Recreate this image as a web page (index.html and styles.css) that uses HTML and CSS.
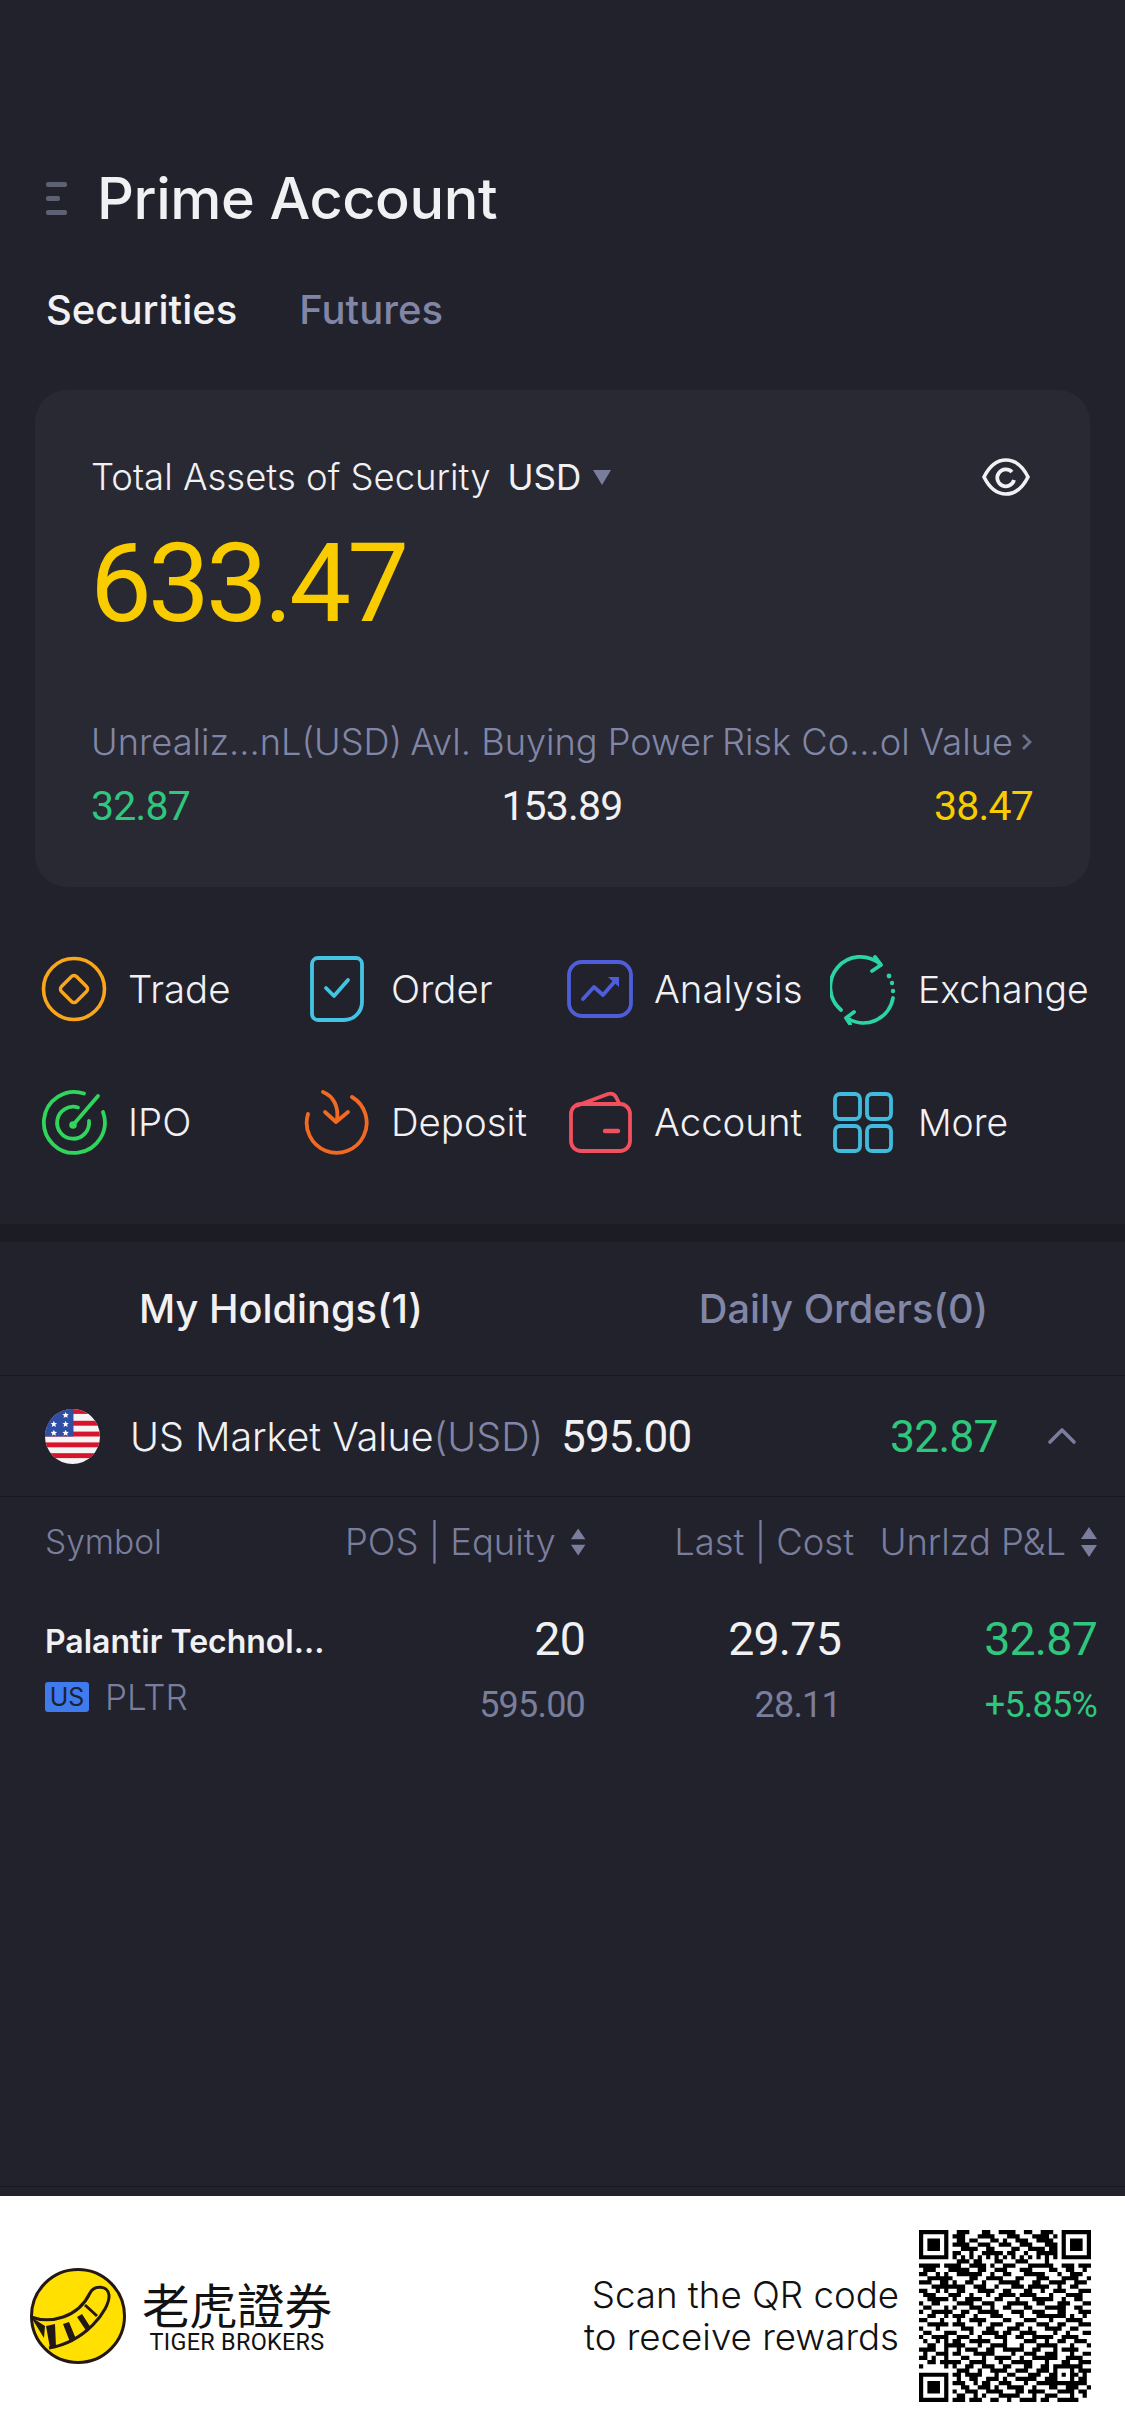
FILE: index.html
```html
<!DOCTYPE html>
<html lang="en">
<head>
<meta charset="utf-8">
<title>Prime Account</title>
<link rel="stylesheet" href="styles.css">
</head>
<body>
<div class="page">
  <header class="topbar">
    <span class="menu"><i class="m1"></i><i class="m2"></i><i class="m1"></i></span>
    <h1 class="title">Prime Account</h1>
  </header>
  <nav class="seg">
    <span class="seg-on">Securities</span>
    <span class="seg-off">Futures</span>
  </nav>

  <section class="card">
    <div class="card-head">
      <span class="assets">Total Assets of Security</span>
      <span class="ccy">USD</span>
      <svg class="caret" viewBox="0 0 18 16"><path d="M0 1h18L9 16z" fill="#7a7e9c"/></svg>
      <svg class="eye" viewBox="0 0 48 38"><path d="M2 19C8 7 16 2 24 2s16 5 22 17c-6 12-14 17-22 17S8 31 2 19z" fill="none" stroke="#f1f1f4" stroke-width="3.6"/><path d="M30 14a8.5 8.5 0 1 0 2 8" fill="none" stroke="#f1f1f4" stroke-width="3.8"/></svg>
    </div>
    <div class="amount">633.47</div>
    <div class="m-labels">
      <span>Unrealiz...nL(USD)</span>
      <span>Avl. Buying Power</span>
      <span>Risk Co...ol Value</span>
      <svg class="m-chev" viewBox="0 0 12 18"><path d="M2 2l7 7-7 7" fill="none" stroke="#6d7089" stroke-width="2.8"/></svg>
    </div>
    <div class="m-values">
      <span class="num green">32.87</span>
      <span class="num white">153.89</span>
      <span class="num yellow">38.47</span>
    </div>
  </section>

  <section class="actions">
    <div class="act">
      <svg class="ic" viewBox="0 0 66 66"><circle cx="33" cy="33" r="30.5" fill="none" stroke="#f9a61a" stroke-width="3.6"/><path d="M30.5 20.5a3.5 3.5 0 0 1 5 0l10 10a3.5 3.5 0 0 1 0 5l-10 10a3.5 3.5 0 0 1-5 0l-10-10a3.5 3.5 0 0 1 0-5z" fill="none" stroke="#f9a61a" stroke-width="3.4"/></svg>
      <span class="lbl">Trade</span>
    </div>
    <div class="act">
      <svg class="ic" viewBox="0 0 66 66"><path d="M14 2h38a6 6 0 0 1 6 6v38a18 18 0 0 1-18 18H14a6 6 0 0 1-6-6V8a6 6 0 0 1 6-6z" fill="none" stroke="#45c3e3" stroke-width="3.8"/><path d="M22 32l8 8 14-16" fill="none" stroke="#45c3e3" stroke-width="3.8" stroke-linecap="round" stroke-linejoin="round"/></svg>
      <span class="lbl">Order</span>
    </div>
    <div class="act">
      <svg class="ic" viewBox="0 0 66 66"><rect x="2" y="6" width="62" height="54" rx="13" fill="none" stroke="#4e5edb" stroke-width="3.8"/><path d="M16 43l11-12 9 8 13-15" fill="none" stroke="#4e5edb" stroke-width="3.8" stroke-linecap="round" stroke-linejoin="round"/><path d="M41 21h11v10z" fill="#4e5edb"/></svg>
      <span class="lbl">Analysis</span>
    </div>
    <div class="act">
      <svg class="ic tall" viewBox="0 0 66 72"><path d="M11 57A30 30 0 0 1 50 11" fill="none" stroke="#2bd3a6" stroke-width="3.8" stroke-linecap="round"/><path d="M45 4l6 8-9 6M24 59l-8 6 4 6" fill="none" stroke="#2bd3a6" stroke-width="3.8" stroke-linecap="round" stroke-linejoin="round"/><path d="M63 45A30 30 0 0 1 17 65" fill="none" stroke="#2bd3a6" stroke-width="3.8" stroke-linecap="round"/><circle cx="59" cy="23" r="2.4" fill="#2bd3a6"/><circle cx="62" cy="30" r="2.2" fill="#2bd3a6"/><circle cx="63" cy="38" r="2.2" fill="#2bd3a6"/></svg>
      <span class="lbl lbl-sm">Exchange</span>
    </div>
    <div class="act">
      <svg class="ic" viewBox="0 0 66 66"><path d="M43 4.5A30.5 30.5 0 1 0 62 23" fill="none" stroke="#2fd65b" stroke-width="3.8" stroke-linecap="round"/><path d="M37 18.5A16 16 0 1 0 48 32" fill="none" stroke="#2fd65b" stroke-width="3.8" stroke-linecap="round"/><path d="M32 36L57 7" fill="none" stroke="#2fd65b" stroke-width="3.8" stroke-linecap="round"/><circle cx="32" cy="36" r="3.8" fill="#2fd65b"/></svg>
      <span class="lbl">IPO</span>
    </div>
    <div class="act">
      <svg class="ic" viewBox="0 0 66 66"><path d="M48 8a30 30 0 1 1-44 17" fill="none" stroke="#f26a21" stroke-width="3.8" stroke-linecap="round"/><path d="M19 3c10 4 16 14 14 28M21 23l11 10 12-10" fill="none" stroke="#f26a21" stroke-width="3.8" stroke-linecap="round" stroke-linejoin="round"/></svg>
      <span class="lbl">Deposit</span>
    </div>
    <div class="act">
      <svg class="ic" viewBox="0 0 66 66"><rect x="4" y="15" width="59" height="47" rx="10" fill="none" stroke="#f1505f" stroke-width="3.8"/><path d="M9 17l32-12c4-1 6 0 8 3l4 8" fill="none" stroke="#f1505f" stroke-width="3.8" stroke-linejoin="round"/><path d="M38 42h13" stroke="#f1505f" stroke-width="4.4" stroke-linecap="round"/></svg>
      <span class="lbl">Account</span>
    </div>
    <div class="act">
      <svg class="ic" viewBox="0 0 66 66"><g fill="none" stroke="#3fbcdd" stroke-width="3.8"><rect x="5" y="5" width="25" height="25" rx="5"/><rect x="37" y="5" width="24" height="25" rx="5"/><rect x="5" y="37" width="25" height="25" rx="5"/><rect x="37" y="37" width="24" height="25" rx="5"/></g></svg>
      <span class="lbl lbl-sm">More</span>
    </div>
  </section>

  <div class="band"></div>

  <nav class="hold-tabs">
    <span class="ht-on">My Holdings(1)</span>
    <span class="ht-off">Daily Orders(0)</span>
  </nav>

  <section class="market">
    <svg class="flag" viewBox="0 0 56 56">
      <defs><clipPath id="fc"><circle cx="28" cy="28" r="28"/></clipPath></defs>
      <g clip-path="url(#fc)">
        <rect width="56" height="56" fill="#f5f5f5"/>
        <g fill="#d8142c"><rect y="0" width="56" height="5"/><rect y="12" width="56" height="5"/><rect y="23" width="56" height="5"/><rect y="34" width="56" height="5"/><rect y="45" width="56" height="5"/></g>
        <rect width="29" height="28" fill="#2f4fa5"/>
        <g fill="#fff"><path d="M21 3l.9 2.2 2.4.2-1.8 1.5.6 2.3-2.1-1.3-2.1 1.3.6-2.3-1.8-1.5 2.4-.2z"/><path d="M9 12l.9 2.2 2.4.2-1.8 1.5.6 2.3L9 17l-2.1 1.2.6-2.3-1.8-1.5 2.4-.2z"/><path d="M21 12l.9 2.2 2.4.2-1.8 1.5.6 2.3L21 17l-2.1 1.2.6-2.3-1.8-1.5 2.4-.2z"/><path d="M9 21l.9 2.2 2.4.2-1.8 1.5.6 2.3L9 26l-2.1 1.2.6-2.3-1.8-1.5 2.4-.2z"/><path d="M21 21l.9 2.2 2.4.2-1.8 1.5.6 2.3L21 26l-2.1 1.2.6-2.3-1.8-1.5 2.4-.2z"/></g>
      </g>
    </svg>
    <span class="mk-name">US Market Value<span class="mk-ccy">(USD)</span></span>
    <span class="num mk-val">595.00</span>
    <span class="num green mk-pl">32.87</span>
    <svg class="mk-chev" viewBox="0 0 30 18"><path d="M3 15L15 3l12 12" fill="none" stroke="#7a7e9c" stroke-width="3.6" stroke-linecap="round" stroke-linejoin="round"/></svg>
  </section>

  <div class="thead">
    <span class="th th-sym">Symbol</span>
    <span class="th th-r">POS | Equity<svg class="sort" viewBox="0 0 18 30"><path d="M9 0l8 12H1zM9 30L1 18h16z" fill="#7a7e9c"/></svg></span>
    <span class="th th-r">Last | Cost</span>
    <span class="th th-r">Unrlzd P&amp;L<svg class="sort" viewBox="0 0 18 30"><path d="M9 0l8 12H1zM9 30L1 18h16z" fill="#7a7e9c"/></svg></span>
  </div>

  <div class="trow">
    <div class="tc">
      <span class="sname">Palantir Technol...</span>
      <span class="ssub"><span class="badge">US</span><span class="tick">PLTR</span></span>
    </div>
    <div class="tc tr"><span class="num big white">20</span><span class="num small gray">595.00</span></div>
    <div class="tc tr"><span class="num big white">29.75</span><span class="num small gray">28.11</span></div>
    <div class="tc tr"><span class="num big green">32.87</span><span class="num small green">+5.85%</span></div>
  </div>

  <div class="spacer"></div>

  <footer class="promo">
    <svg class="logo" viewBox="0 0 96 96">
      <circle cx="48" cy="48" r="46.5" fill="#ffe000" stroke="#231815" stroke-width="3"/>
      <path d="M1 49C20 56 48 50 60 25 64 17 78 17 79 27 80 42 55 74 19 80" fill="none" stroke="#231815" stroke-width="3"/>
      <path d="M1 49l14 9-1 12zM16 58l9-2 1 23-6 1zM33 56l6-2 7 17-6 3zM47 49l5-3 9 14-4 4zM54 38l2-2 12 11-2 2z" fill="#231815"/>
    </svg>
    <div class="brand">
      <span class="brand-cn">老虎證券</span>
      <span class="brand-en">TIGER BROKERS</span>
    </div>
    <div class="scan">Scan the QR code<br>to receive rewards</div>
    <svg class="qr" viewBox="0 0 41 41">
      <path fill="none" stroke="#000" stroke-width="1" d="M.5 .5h6v6h-6zM2 2.5h3M2 3.5h3M2 4.5h3M34.5 .5h6v6h-6zM36 2.5h3M36 3.5h3M36 4.5h3M.5 34.5h6v6h-6zM2 36.5h3M2 37.5h3M2 38.5h3M32.5 32.5h4v4h-4zM34 34.5h1
      M9 .5h3M15 .5h2M19 .5h4M25 .5h2M29 .5h3
      M8 1.5h3M14 1.5h4M21 1.5h3M27 1.5h4M32 1.5h1
      M9 2.5h2M12 2.5h2M17 2.5h2M20 2.5h1M23 2.5h3M28 2.5h4
      M8 3.5h4M14 3.5h3M19 3.5h3M24 3.5h3M30 3.5h3
      M10 4.5h4M16 4.5h2M22 4.5h2M26 4.5h4M31 4.5h2
      M8 5.5h2M12 5.5h1M15 5.5h5M21 5.5h2M25 5.5h1M28 5.5h5
      M8 6.5h1M10 6.5h1M12 6.5h1M14 6.5h1M16 6.5h1M18 6.5h1M20 6.5h1M22 6.5h1M24 6.5h1M26 6.5h1M28 6.5h1M30 6.5h1M32 6.5h1
      M9 7.5h3M13 7.5h2M18 7.5h2M23 7.5h3M30 7.5h1
      M0 8.5h5M6 8.5h4M12 8.5h4M17 8.5h1M20 8.5h3M26 8.5h6M34 8.5h3M38 8.5h3
      M1 9.5h3M7 9.5h5M14 9.5h2M18 9.5h3M24 9.5h3M31 9.5h2M35 9.5h2M39 9.5h1
      M0 10.5h2M4 10.5h1M6 10.5h1M9 10.5h6M17 10.5h1M20 10.5h2M25 10.5h5M33 10.5h1M36 10.5h3
      M2 11.5h6M12 11.5h2M16 11.5h4M23 11.5h2M28 11.5h3M34 11.5h4M40 11.5h1
      M0 12.5h3M5 12.5h2M8 12.5h1M11 12.5h2M15 12.5h1M19 12.5h5M27 12.5h2M31 12.5h4M37 12.5h3
      M3 13.5h8M13 13.5h3M18 13.5h1M22 13.5h3M26 13.5h5M33 13.5h1M36 13.5h2
      M0 14.5h2M4 14.5h1M6 14.5h1M9 14.5h2M14 14.5h4M20 14.5h2M25 14.5h2M29 14.5h1M32 14.5h3M38 14.5h3
      M1 15.5h3M7 15.5h3M12 15.5h1M16 15.5h1M19 15.5h4M24 15.5h4M31 15.5h1M35 15.5h4
      M2 16.5h5M8 16.5h1M11 16.5h4M18 16.5h2M23 16.5h1M27 16.5h5M34 16.5h1M37 16.5h2
      M0 17.5h1M3 17.5h2M9 17.5h4M15 17.5h3M21 17.5h5M28 17.5h2M33 17.5h3M39 17.5h2
      M1 18.5h2M6 18.5h1M8 18.5h1M12 18.5h3M17 18.5h1M20 18.5h2M25 18.5h2M30 18.5h5M37 18.5h2
      M0 19.5h1M3 19.5h5M10 19.5h2M14 19.5h5M22 19.5h3M27 19.5h3M33 19.5h2M38 19.5h3
      M2 20.5h2M6 20.5h1M8 20.5h3M13 20.5h1M17 20.5h3M24 20.5h1M28 20.5h7M36 20.5h1M39 20.5h1
      M0 21.5h2M5 21.5h1M9 21.5h1M12 21.5h4M20 21.5h2M25 21.5h3M31 21.5h1M35 21.5h4
      M2 22.5h5M8 22.5h3M14 22.5h1M17 22.5h3M23 22.5h2M28 22.5h3M33 22.5h2M38 22.5h3
      M0 23.5h1M4 23.5h1M10 23.5h3M16 23.5h2M21 23.5h3M26 23.5h1M30 23.5h4M36 23.5h2
      M1 24.5h2M6 24.5h3M12 24.5h1M15 24.5h4M20 24.5h2M24 24.5h4M32 24.5h1M35 24.5h1M39 24.5h2
      M0 25.5h1M3 25.5h4M9 25.5h3M14 25.5h1M18 25.5h3M23 25.5h2M27 25.5h5M34 25.5h4
      M1 26.5h1M4 26.5h1M6 26.5h1M8 26.5h2M12 26.5h5M20 26.5h1M25 26.5h3M30 26.5h1M33 26.5h2M37 26.5h3
      M2 27.5h2M6 27.5h5M14 27.5h1M17 27.5h4M24 27.5h1M28 27.5h5M36 27.5h1M40 27.5h1
      M0 28.5h4M6 28.5h1M9 28.5h1M11 28.5h3M16 28.5h2M20 28.5h5M27 28.5h2M32 28.5h1M34 28.5h4
      M1 29.5h1M4 29.5h3M8 29.5h2M13 29.5h5M22 29.5h1M25 29.5h3M30 29.5h3M36 29.5h1M39 29.5h2
      M0 30.5h2M3 30.5h1M6 30.5h1M10 30.5h2M15 30.5h1M18 30.5h4M24 30.5h1M27 30.5h6M35 30.5h4
      M2 31.5h2M5 31.5h5M12 31.5h4M19 31.5h1M22 31.5h5M30 31.5h1M34 31.5h2M38 31.5h3
      M0 32.5h1M6 32.5h1M8 32.5h1M11 32.5h2M15 32.5h3M20 32.5h2M25 32.5h2M29 32.5h2M37 32.5h2
      M9 33.5h3M14 33.5h1M17 33.5h4M23 33.5h3M28 33.5h3M38 33.5h3
      M8 34.5h2M11 34.5h4M18 34.5h1M21 34.5h2M26 34.5h3M31 34.5h1M37 34.5h1M39 34.5h1
      M9 35.5h1M12 35.5h2M16 35.5h3M20 35.5h1M23 35.5h5M30 35.5h2M38 35.5h2
      M8 36.5h3M13 36.5h1M15 36.5h2M19 36.5h3M25 36.5h1M28 36.5h4M37 36.5h3
      M10 37.5h2M14 37.5h3M18 37.5h1M21 37.5h4M27 37.5h1M31 37.5h2M35 37.5h3M40 37.5h1
      M8 38.5h1M11 38.5h3M16 38.5h4M23 38.5h2M26 38.5h4M33 38.5h4M38 38.5h2
      M9 39.5h2M13 39.5h1M15 39.5h1M19 39.5h5M27 39.5h1M30 39.5h3M36 39.5h1M39 39.5h1
      M8 40.5h3M12 40.5h3M17 40.5h2M21 40.5h1M24 40.5h4M29 40.5h2M33 40.5h5"/>
    </svg>
  </footer>
</div>
</body>
</html>
```

FILE: styles.css
```css
* { box-sizing: border-box; margin: 0; padding: 0; }
html, body { background: #21222c; }
body { width: 1125px; height: 2436px; overflow: hidden; font-family: Inter, "Noto Sans", sans-serif; color: #f1f1f4; }
.page { display: flex; flex-direction: column; width: 1125px; height: 2436px; background: #21222c; }

.topbar { display: flex; align-items: center; height: 76px; margin-top: 160px; padding-left: 46px; }
.menu { display: flex; flex-direction: column; gap: 9px; width: 51px; }
.menu i { display: block; height: 5px; border-radius: 2px; background: #5e6173; }
.m1 { width: 21px; }
.m2 { width: 14px; }
.title { font-size: 57.6px; font-weight: 500; letter-spacing: -.4px; color: #f1f1f4; }

.seg { display: flex; align-items: center; gap: 62px; height: 146px; margin-bottom: 8px; padding-left: 46px; font-size: 40px; font-weight: 500; }
.seg-on { color: #f1f1f4; }
.seg-off { color: #8286a6; }

.card { display: flex; flex-direction: column; height: 497px; margin: 0 35px; padding: 70px 57px 0 56px; border-radius: 32px; background: #282933; }
.card-head { display: flex; align-items: center; height: 34px; font-size: 36.5px; font-weight: 300; }
.ccy { margin-left: 17px; font-size: 35px; font-weight: 400; }
.caret { width: 18px; height: 16px; margin-left: 12px; }
.eye { width: 48px; height: 38px; margin-left: auto; margin-right: 3px; }
.amount { height: 130px; margin-top: 25px; margin-left: -1px; font-family: Roboto, sans-serif; font-size: 110px; line-height: 130px; letter-spacing: -3.8px; color: #f9cc00; }
.m-labels { display: flex; align-items: center; justify-content: space-between; height: 40px; margin-top: 73px; font-size: 36.2px; font-weight: 300; color: #8286a6; white-space: nowrap; }
.m-chev { width: 12px; height: 18px; }
.m-values { display: flex; align-items: center; justify-content: space-between; height: 40px; margin-top: 24px; }

.num { font-family: Roboto, sans-serif; font-size: 41px; letter-spacing: -.8px; white-space: nowrap; }
.green { color: #2fc77d; }
.white { color: #f1f1f4; }
.yellow { color: #f9cc00; }
.gray { color: #7a7e9c; }

.actions { display: grid; grid-template-columns: repeat(4, 263px); grid-auto-rows: 72px; row-gap: 61px; margin-top: 66px; padding-left: 41px; }
.act { display: flex; align-items: center; gap: 21px; }
.ic { flex: none; width: 66px; height: 66px; }
.ic.tall { height: 72px; }
.lbl { font-size: 38.4px; font-weight: 300; color: #f1f1f4; white-space: nowrap; }
.lbl-sm { margin-left: 1px; font-size: 37.3px; }

.band { flex: none; height: 18px; margin-top: 66px; background: #1b1c24; }

.hold-tabs { display: grid; grid-template-columns: 562px 563px; align-items: center; height: 134px; border-bottom: 1px solid #181920; font-size: 39.7px; font-weight: 500; text-align: center; }
.ht-on { color: #f1f1f4; }
.ht-off { color: #8286a6; }

.market { display: flex; align-items: center; height: 121px; padding-left: 45px; border-bottom: 1px solid #181920; }
.flag { flex: none; width: 55px; height: 55px; margin-right: 30px; }
.mk-name { width: 431px; padding-top: 2px; font-size: 39.4px; font-weight: 300; white-space: nowrap; }
.mk-ccy { color: #8286a6; }
.mk-val { width: 329px; padding-top: 2px; font-size: 44px; }
.mk-pl { width: 157px; padding-top: 2px; font-size: 44.5px; }
.mk-chev { width: 30px; height: 18px; }

.thead { display: grid; grid-template-columns: 300px 241px 268px 244px; align-items: center; height: 90px; padding-left: 45px; }
.th { display: flex; align-items: center; justify-content: flex-end; font-size: 36.4px; font-weight: 300; color: #7a7e9c; white-space: nowrap; }
.th-sym { justify-content: flex-start; font-size: 33.5px; }
.sort { width: 18px; height: 30px; margin-left: 14px; }

.trow { display: grid; grid-template-columns: 300px 240px 256px 256px; margin-top: 25px; padding-left: 45px; }
.tc { display: flex; flex-direction: column; }
.tr { align-items: flex-end; }
.sname { height: 60px; font-size: 32px; font-weight: 600; line-height: 60px; white-space: nowrap; }
.ssub { display: flex; align-items: center; gap: 16px; height: 50px; }
.badge { width: 44px; height: 30px; border-radius: 3px; background: #3f7bec; font-size: 25px; line-height: 30px; text-align: center; color: #1b2233; }
.tick { font-size: 35px; font-weight: 300; color: #7a7e9c; }
.big { height: 60px; font-size: 46.5px; line-height: 54px; }
.small { height: 50px; font-size: 36px; line-height: 66px; }

.spacer { flex: 1; border-bottom: 1px solid #181920; margin-bottom: 9px; }

.promo { display: flex; align-items: center; flex: none; height: 240px; padding-left: 30px; background: #fff; color: #000; }
.logo { flex: none; width: 96px; height: 96px; }
.brand { display: flex; flex-direction: column; align-items: center; width: 190px; margin-left: 16px; padding-top: 3px; }
.brand-cn { font-family: "Noto Sans CJK TC", sans-serif; font-size: 47.5px; line-height: 50px; color: #111; }
.brand-en { font-family: Roboto, sans-serif; font-size: 23.4px; font-weight: 400; line-height: 27px; letter-spacing: .3px; color: #111; }
.scan { flex: 1; padding-right: 20px; font-family: Inter, sans-serif; font-size: 36.7px; font-weight: 300; line-height: 42px; text-align: right; color: #111; }
.qr { flex: none; width: 172px; height: 172px; margin-right: 34px; }
```
